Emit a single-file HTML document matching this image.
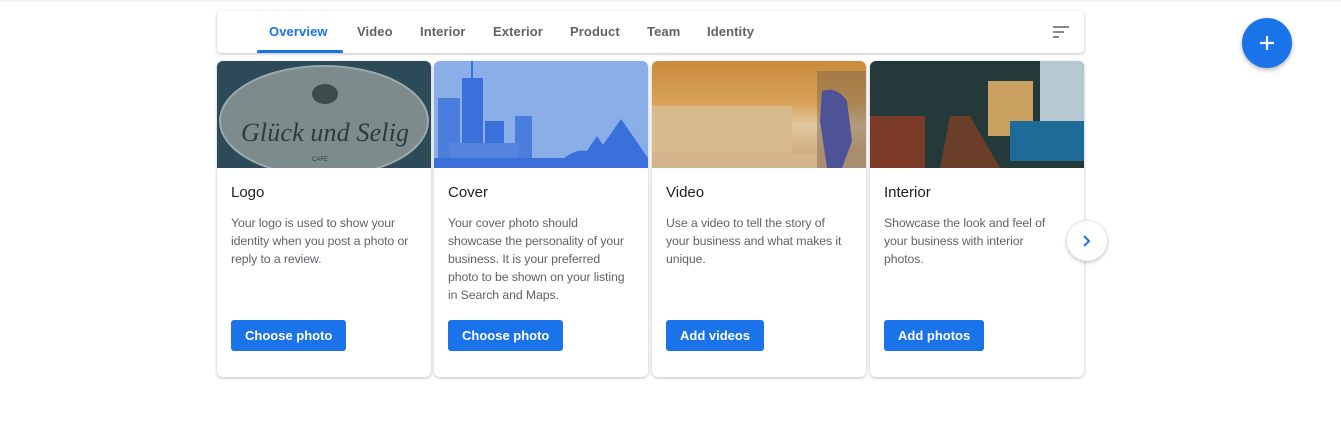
<!DOCTYPE html>
<html><head><style>
body{margin:0;width:1341px;height:423px;background:#fff;position:relative;overflow:hidden;font-family:"Liberation Sans",sans-serif}
.topline{position:absolute;left:0;top:0;width:1341px;height:2px;background:#f1f1f1}
.tabs{position:absolute;left:217px;top:11px;width:867px;height:42px;background:#fff;border-radius:4px;box-shadow:0 1px 3px rgba(0,0,0,.25)}
.tab{position:absolute;top:13px;font-size:13px;color:#5f6368;font-weight:bold;letter-spacing:.1px}
.ul{position:absolute;left:40px;top:39px;width:86px;height:3px;background:#1a73e8;border-radius:2px 2px 0 0}
.card{position:absolute;top:61px;width:214px;height:316px;background:#fff;border-radius:6px;box-shadow:0 1px 3px rgba(0,0,0,.25);overflow:hidden}
.img{position:absolute;left:0;top:0;width:214px;height:107px}
.t{position:absolute;left:14px;top:123px;font-size:15px;color:#202124}
.d{position:absolute;left:14px;top:153px;width:200px;font-size:12.3px;line-height:18px;color:#5f6368;letter-spacing:-.1px;white-space:nowrap}
.b{position:absolute;left:14px;top:259px;height:31px;line-height:31px;padding:0 14px;background:#1a73e8;color:#fff;font-size:13px;font-weight:bold;border-radius:3px}
</style></head><body>
<div class="topline"></div>
<div class="tabs">
<span class="tab" style="left:52px;color:#1a73e8">Overview</span>
<span class="tab" style="left:140px">Video</span>
<span class="tab" style="left:203px">Interior</span>
<span class="tab" style="left:276px">Exterior</span>
<span class="tab" style="left:353px">Product</span>
<span class="tab" style="left:430px">Team</span>
<span class="tab" style="left:490px">Identity</span>
<div class="ul"></div>
<svg style="position:absolute;left:835px;top:14px" width="18" height="14"><path d="M1 2h16M1 7h11M1 12h6" stroke="#5f6368" stroke-width="1.6"/></svg>
</div>

<div class="card" style="left:217px">
<div class="img" style="background:#2c4a57"><svg width="214" height="107"><ellipse cx="107" cy="60" rx="104" ry="55" fill="#7d8b8c" stroke="#9aa" stroke-width="2"/><ellipse cx="108" cy="33" rx="13" ry="10" fill="#3c4c4c"/><text x="24" y="80" font-family="Liberation Serif" font-style="italic" font-size="26" fill="#2f3b3b" textLength="168">Glück und Selig</text><text x="95" y="100" font-size="6" fill="#2f3b3b">CAFE</text></svg></div>
<div class="t">Logo</div>
<div class="d">Your logo is used to show your<br>identity when you post a photo or<br>reply to a review.</div>
<div class="b">Choose photo</div>
</div>

<div class="card" style="left:434px">
<div class="img" style="background:#8aaee8"><svg width="214" height="107"><rect x="28" y="17" width="21" height="80" fill="#3b6fd9"/><rect x="37" y="0" width="2" height="20" fill="#3b6fd9"/><rect x="4" y="37" width="22" height="60" fill="#4a7ddc"/><rect x="51" y="60" width="19" height="37" fill="#3b6fd9"/><rect x="81" y="55" width="17" height="42" fill="#4a7ddc"/><rect x="15" y="82" width="70" height="15" fill="#5584de"/><path d="M160 97L187 58L214 97ZM148 97L163 75L178 97Z" fill="#3b6fd9"/><path d="M130 97Q150 82 165 97Z" fill="#3b6fd9"/><rect x="0" y="97" width="214" height="10" fill="#3b6fd9"/></svg></div>
<div class="t">Cover</div>
<div class="d">Your cover photo should<br>showcase the personality of your<br>business. It is your preferred<br>photo to be shown on your listing<br>in Search and Maps.</div>
<div class="b">Choose photo</div>
</div>

<div class="card" style="left:652px">
<div class="img" style="background:linear-gradient(180deg,#c98a3a 0%,#d9a35a 40%,#e0c8a0 60%,#c7a070 100%)"><svg width="214" height="107"><rect x="0" y="45" width="140" height="50" fill="#d8bb8c"/><rect x="0" y="92" width="214" height="15" fill="#d4b48a"/><path d="M170 30Q185 25 195 40L200 80L190 107H175L168 60Z" fill="#3a4fc8"/><rect x="165" y="10" width="49" height="97" fill="#6b5a4a" opacity=".4"/></svg></div>
<div class="t">Video</div>
<div class="d">Use a video to tell the story of<br>your business and what makes it<br>unique.</div>
<div class="b">Add videos</div>
</div>

<div class="card" style="left:870px">
<div class="img" style="background:#243a3a"><svg width="214" height="107"><rect x="0" y="55" width="55" height="52" fill="#7a3a25"/><rect x="118" y="20" width="45" height="55" fill="#c9a060"/><rect x="170" y="0" width="44" height="70" fill="#b8c8d0"/><rect x="140" y="60" width="74" height="40" fill="#1e6b9a"/><path d="M70 107L80 55H100L130 107Z" fill="#6a3e28"/></svg></div>
<div class="t">Interior</div>
<div class="d">Showcase the look and feel of<br>your business with interior<br>photos.</div>
<div class="b">Add photos</div>
</div>

<div style="position:absolute;left:1067px;top:221px;width:40px;height:40px;border-radius:50%;background:#fff;box-shadow:0 1px 4px rgba(0,0,0,.3)"><svg width="40" height="40"><path d="M17 15l5 5-5 5" stroke="#1a73e8" stroke-width="2" fill="none"/></svg></div>
<div style="position:absolute;left:1242px;top:18px;width:50px;height:50px;border-radius:50%;background:#1a73e8;box-shadow:0 2px 5px rgba(0,0,0,.3)"><svg width="50" height="50"><path d="M25 18v14M18 25h14" stroke="#fff" stroke-width="2.2"/></svg></div>
</body></html>
